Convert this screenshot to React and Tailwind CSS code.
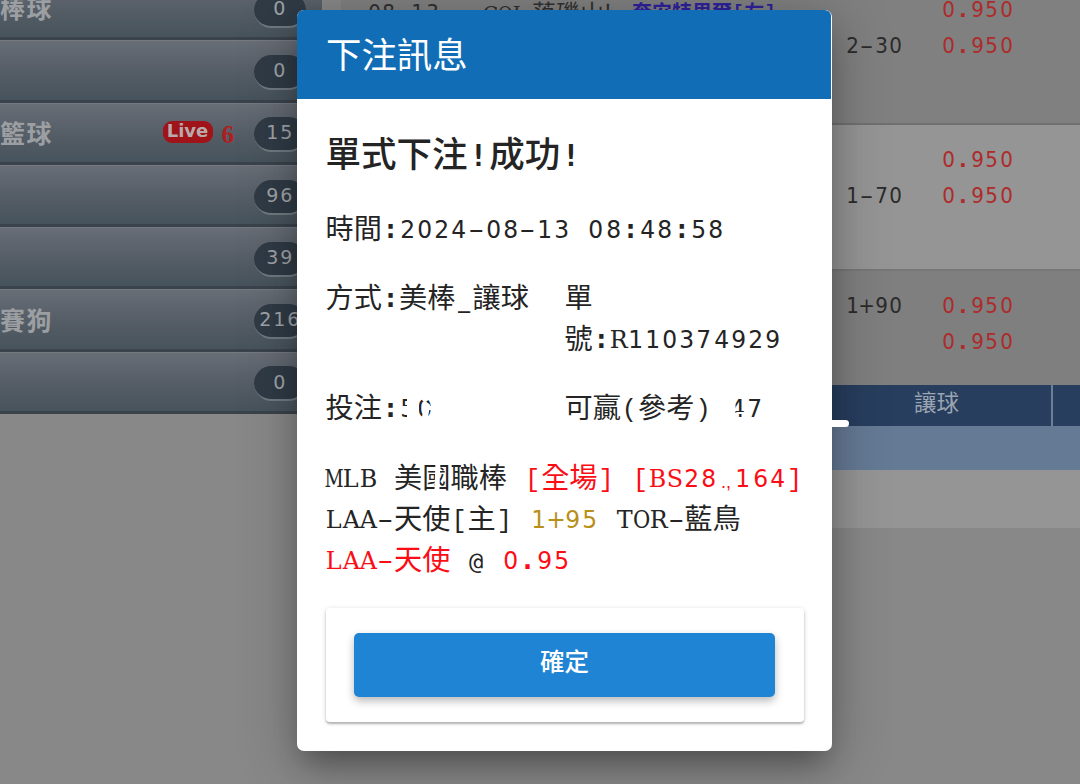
import React from "react";

/* Typeface, size and horizontal proportion of each kind of narrow character. */
function faceOf(ch) {
  if (ch === "M") return "font-['DejaVu_Serif'] text-[0.83em] scale-x-[0.8]";
  if (ch === "O") return "font-['DejaVu_Serif'] text-[0.83em] scale-x-[0.9]";
  if (/[A-Z]/.test(ch)) return "font-['DejaVu_Serif'] text-[0.83em] scale-x-[1.02]";
  if (/[[\]()]/.test(ch)) return "font-['Liberation_Mono'] text-[0.9em]";
  if (ch === "-") return "font-['Liberation_Sans'] text-[0.9em] scale-x-[1.9]";
  if (ch === "@") return "font-['DejaVu_Sans_Mono'] text-[0.84em]";
  if (ch === ":" || ch === ".") return "font-['DejaVu_Sans_Mono'] font-bold text-[0.92em]";
  if (ch === "!") return "font-['DejaVu_Sans_Mono'] text-[0.86em]";
  return "font-['DejaVu_Sans'] text-[0.855em] scale-x-[0.97]";
}

/* Fixed-pitch text: narrow characters share one cell width, wide characters keep their own. */
function Mono({ children, bold = false }) {
  return Array.from(children).map((ch, i) => {
    if (ch.charCodeAt(0) > 0x2e80) return <React.Fragment key={i}>{ch}</React.Fragment>;
    return (
      <span key={i} className="inline-flex w-[0.608em] justify-center align-[0.04em] leading-none whitespace-pre">
        <span className={`inline-block ${faceOf(ch)} ${bold ? "font-bold" : ""}`}>{ch}</span>
      </span>
    );
  });
}

const sports = [
  { name: "棒球", count: "0" },
  { name: "", count: "0" },
  { name: "籃球", count: "15", live: "6" },
  { name: "", count: "96" },
  { name: "", count: "39" },
  { name: "賽狗", count: "216" },
  { name: "", count: "0" },
];

function SportRow({ name, count, live }) {
  return (
    <div className="flex h-[62.3px] shrink-0 items-center border-b-[3px] border-[#3a424b] bg-linear-to-b from-[#696e77] via-[#565e67] to-[#47535c] shadow-[inset_0_1px_0_#747982]">
      <div className="w-[53px] shrink-0 text-right text-[25px] leading-none font-bold tracking-[1.5px] whitespace-nowrap text-[#9c9fa2]">
        {name}
      </div>
      <div className="flex flex-1 items-center justify-end gap-[9px] pr-5">
        {live && (
          <>
            <span className="flex h-[22px] w-[50px] items-center justify-center rounded-[9px] bg-[#a01318] pb-0.5 font-['DejaVu_Sans'] text-[18px] leading-none font-bold text-[#b9a9aa]">
              Live
            </span>
            <span className="pt-1 font-['Liberation_Serif'] text-[25px] leading-none font-bold text-[#b01d20]">{live}</span>
          </>
        )}
      </div>
      <div className="mt-[5px] mr-4 flex h-[35px] w-[52px] shrink-0 items-center justify-center rounded-full border-b-2 border-[#717a82] bg-[#303b46] pr-0.5 pb-px text-[23px] leading-none text-[#a0a4a8]">
        <Mono>{count}</Mono>
      </div>
    </div>
  );
}

function Odds({ label, labelClass, className }) {
  return (
    <div className={`flex text-[24px] leading-9 ${className}`}>
      <div className={`w-[96px] text-[#2b2b2b] ${labelClass}`}>
        <Mono>{label}</Mono>
      </div>
      <div className="text-[#ad2b2b]">
        <div><Mono>0.950</Mono></div>
        <div><Mono>0.950</Mono></div>
      </div>
    </div>
  );
}

export default function App() {
  return (
    <div className="relative flex h-[784px] w-[1080px] overflow-hidden bg-[#888888] font-['Noto_Sans_CJK_TC',sans-serif]">
      <aside className="flex w-[322px] shrink-0 flex-col">
        <div className="-mt-[22px]">
          {sports.map((s, i) => (
            <SportRow key={i} {...s} />
          ))}
        </div>
      </aside>

      <main className="flex flex-1 flex-col pl-[19px]">
        <section className="flex h-[125px] items-start border-b-2 border-[#707070] bg-[#808080]">
          <div className="-mt-2 flex w-[504px] shrink-0 items-center pl-[26px] text-[24px] leading-9 whitespace-nowrap text-[#303030]">
            <span className="w-[116px]"><Mono>08-13</Mono></span>
            <span className="w-[149px] pt-px"><Mono>COL</Mono> 落磯山!</span>
            <span className="flex items-center pt-0.5 text-[20px] font-bold text-[#2f229c]">奎安特里爾<Mono>[</Mono>左<Mono>]</Mono></span>
          </div>
          <Odds label="2-30" labelClass="pt-9" className="-mt-2.5" />
        </section>
        <section className="flex h-[146px] border-b-2 border-[#777777] bg-[#959595] pl-[504px]">
          <Odds label="1-70" labelClass="pt-9" className="pt-[15px]" />
        </section>
        <section className="flex h-[114px] bg-[#7f7f7f] pl-[504px]">
          <Odds label="1+90" labelClass="" className="pt-[15px]" />
        </section>
        <section className="flex h-[41px] text-[22.5px] leading-[33px] text-[#9ba5b1]">
          <div className="w-[712px] border-r-2 border-[#6c7f96] bg-[#273e5e] pl-[573px] whitespace-nowrap">讓球</div>
          <div className="flex-1 bg-[#273e5e]" />
        </section>
        <section className="h-[44px] bg-[#657a95]" />
        <section className="h-[58px] bg-[#959595]" />
      </main>

      <div
        role="dialog"
        className="absolute top-[10px] left-[297px] flex h-[741px] w-[535px] flex-col overflow-hidden rounded-[7px] bg-white text-[#242424] shadow-[0_18px_28px_-8px_rgba(0,0,0,0.32),0_10px_55px_8px_rgba(0,0,0,0.2)]"
      >
        <header className="mr-px h-[89px] shrink-0 rounded-tr-[6px] bg-[#116db6] pt-[17px] pl-[29px] text-[35.4px] leading-[52px] text-white">
          下注訊息
        </header>
        <div className="flex flex-1 flex-col pl-[28.5px] text-[28.2px] leading-[41px] whitespace-nowrap">
          <h1 className="mt-[27px] h-[52px] text-[35.5px] leading-[52px] font-medium">
            <Mono bold>單式下注!成功!</Mono>
          </h1>
          <p className="mt-[28px] h-[41px]">
            <Mono>時間:2024-08-13 08:48:58</Mono>
          </p>
          <div className="mt-[28px] flex h-[82px]">
            <div className="w-[239px]"><Mono>方式:美棒_讓球</Mono></div>
            <div>
              單<br />
              <Mono>號:R110374929</Mono>
            </div>
          </div>
          <div className="mt-[28px] flex h-[41px]">
            <div className="relative w-[239px]">
              <Mono>投注:50</Mono>
              <svg className="absolute top-0 left-[74px]" width="40" height="41" fill="none" stroke="#fff" strokeLinecap="round">
                <path d="M13 8 V34" strokeWidth="12" />
                <path d="M21 9 L25 14 M27 21 L25 32" strokeWidth="6" />
                <path d="M2 23 H12 M28 23 H34" strokeWidth="4" />
              </svg>
            </div>
            <div className="relative">
              <Mono>可贏(參考):47</Mono>
              <svg className="absolute top-0 left-[148px]" width="54" height="41" fill="none" stroke="#fff" strokeLinecap="round">
                <path d="M8 10 V31" strokeWidth="15" />
                <path d="M18 11 L19 17 L19 30" strokeWidth="7" />
                <path d="M24 28 H33" strokeWidth="2" />
              </svg>
            </div>
          </div>
          <div className="relative mt-[29px] h-[123px]">
            <div className="h-[41px]">
              <Mono>MLB 美國職棒 </Mono>
              <span className="text-[#fb0d16]">
                <Mono>[全場] [BS28</Mono>
                <span className="inline-block w-[17px] text-center font-['Liberation_Sans'] text-[18px] leading-none">.,</span>
                <Mono>164]</Mono>
              </span>
            </div>
            <div className="h-[41px]">
              <Mono>LAA-天使[主] </Mono>
              <span className="text-[#b88f19]"><Mono>1+95</Mono></span>
              <Mono> TOR-藍鳥</Mono>
            </div>
            <div className="h-[41px]">
              <span className="text-[#fb0d16]"><Mono>LAA-天使</Mono></span>
              <Mono> @ </Mono>
              <span className="text-[#fb0d16]"><Mono>0.95</Mono></span>
            </div>
            <svg className="absolute top-0 left-[66px]" width="60" height="41" fill="none" stroke="#fff" strokeLinecap="round">
              <path d="M46 5 L45 34" strokeWidth="5" />
              <path d="M2 9 L8 20" strokeWidth="3" />
            </svg>
          </div>
          <div className="mt-[30px] flex h-[114px] w-[478px] items-center justify-center rounded-[4px] bg-white shadow-[0_2px_2px_rgba(0,0,0,0.22),0_1px_5px_rgba(0,0,0,0.16)]">
            <button className="flex h-[64px] w-[421px] items-center justify-center rounded-[5px] bg-[#1f84d3] pb-[7px] text-[24.5px] leading-none font-medium text-white shadow-[0_4px_8px_rgba(0,0,0,0.28)]">
              確定
            </button>
          </div>
        </div>
      </div>
      <div className="absolute top-[420px] left-[820px] h-[7px] w-[28.5px] rounded-full bg-white" />
    </div>
  );
}
